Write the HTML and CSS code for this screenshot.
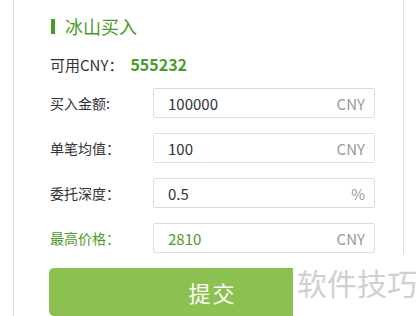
FILE: index.html
```html
<!DOCTYPE html>
<html lang="zh-CN">

<head>
    <meta charset="UTF-8">
    <title>冰山买入</title>
    <link rel="stylesheet" href="styles.css">
</head>

<body>
    <div class="panel">
        <h3 class="panel_title">冰山买入</h3>
        <p class="balance">可用CNY：<b>555232</b></p>

        <form class="order_form">
            <div class="form_row">
                <label class="row_label" for="amount">买入金额:</label>
                <div class="field">
                    <input type="text" id="amount" value="100000">
                    <span class="unit">CNY</span>
                </div>
            </div>

            <div class="form_row">
                <label class="row_label" for="avg">单笔均值：</label>
                <div class="field">
                    <input type="text" id="avg" value="100">
                    <span class="unit">CNY</span>
                </div>
            </div>

            <div class="form_row">
                <label class="row_label" for="depth">委托深度：</label>
                <div class="field">
                    <input type="text" id="depth" value="0.5">
                    <span class="unit">%</span>
                </div>
            </div>

            <div class="form_row row_hl">
                <label class="row_label" for="price">最高价格：</label>
                <div class="field">
                    <input type="text" id="price" value="2810">
                    <span class="unit">CNY</span>
                </div>
            </div>

            <button type="button" class="btn_sub">提交</button>
        </form>
    </div>

    <div class="watermark">软件技巧</div>
</body>

</html>
```

FILE: styles.css
```css
body {
    margin: 0;
    background-color: white;
    font-family: "Noto Sans CJK SC", "Noto Sans", sans-serif;
    color: #333333;
    overflow: hidden;
}

.panel {
    box-sizing: border-box;
    width: 391px;
    height: 316px;
    margin-left: 13px;
    padding: 14px 0 0 36px;
    border-left: 1px solid #DDDDDD;
    border-right: 1px solid #DDDDDD;
}

.panel_title {
    display: flex;
    align-items: center;
    margin: 0;
    height: 24px;
    font-size: 18px;
    font-weight: normal;
    color: #4C9A2A;
}

.panel_title::before {
    content: "";
    width: 4px;
    height: 15px;
    margin: 1px 10px 0 1px;
    background-color: #4C9A2A;
}

.balance {
    margin: 14px 0 0;
    height: 24px;
    line-height: 24px;
    font-size: 15px;
}

.balance b {
    margin-left: 7px;
    font-size: 16px;
    color: #4C9A2A;
}

.order_form {
    display: flex;
    flex-direction: column;
    gap: 15px;
    margin-top: 12px;
    width: 326px;
}

.form_row {
    display: flex;
    align-items: center;
    height: 30px;
}

.row_label {
    width: 103px;
    font-size: 14px;
    color: #333333;
}

.field {
    box-sizing: border-box;
    display: flex;
    align-items: center;
    width: 222px;
    height: 30px;
    padding: 0 9px 0 14px;
    border: 1px solid #DDDDDD;
    border-radius: 2px;
}

.field input {
    flex: 1;
    min-width: 0;
    border: none;
    outline: none;
    padding: 0;
    font-family: inherit;
    font-size: 15px;
    color: #333333;
    background: transparent;
}

.unit {
    font-size: 15px;
    color: #999999;
}

.row_hl .row_label,
.row_hl .field input {
    color: #4C9A2A;
}

.btn_sub {
    height: 48px;
    margin-left: -1px;
    border: none;
    border-radius: 5px;
    background-color: #8CC152;
    color: white;
    font-family: inherit;
    font-size: 22px;
    letter-spacing: 2px;
}

.watermark {
    position: absolute;
    left: 293px;
    top: 254px;
    width: 125px;
    height: 62px;
    padding: 10px 0 0 4px;
    box-sizing: border-box;
    background-color: white;
    color: #D0D0D0;
    font-size: 30px;
    line-height: 36px;
    white-space: nowrap;
}
```
